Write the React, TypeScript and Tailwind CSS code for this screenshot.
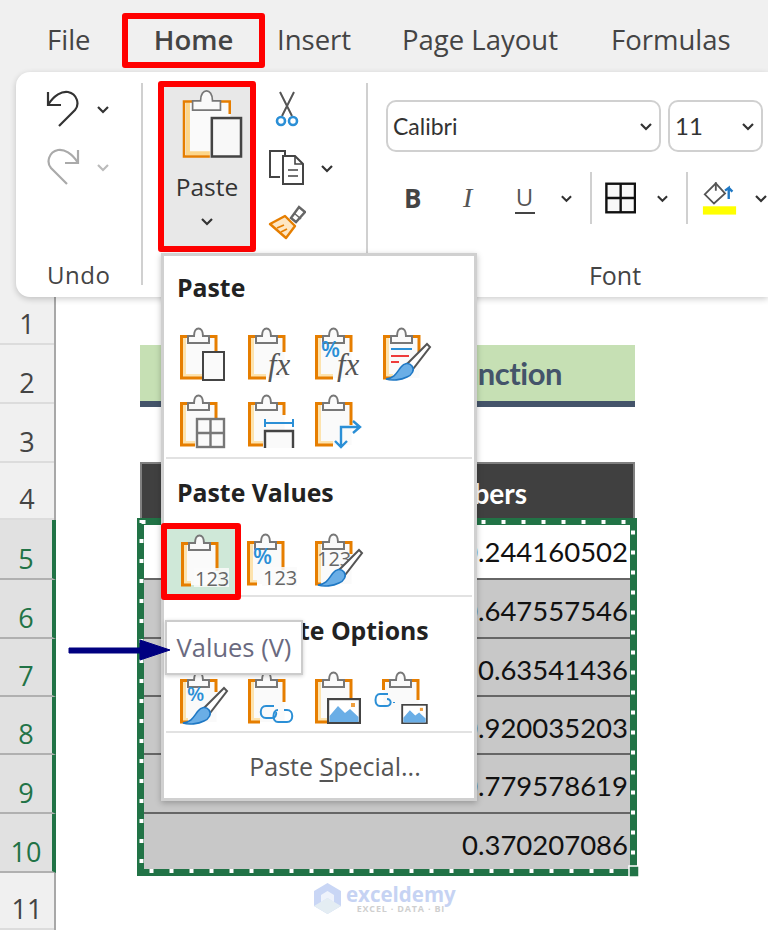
import React from "react";

const UI = "font-['Open_Sans',sans-serif]";
const CAL = "font-['Lato','Liberation_Sans',sans-serif]";
const ORANGE = "#e67e00";
const BLUE = "#2b8fd6";

function Chev({ c = "#333", className = "" }: { c?: string; className?: string }) {
  return (
    <svg width="14" height="9" viewBox="0 0 14 9" className={className}>
      <path d="M2 2 L7 7 L12 2" fill="none" stroke={c} strokeWidth="2.2" />
    </svg>
  );
}

function Clip({
  children,
  rightEnd = 50,
  bottomEnd = 36.5,
  w = 46,
  h = 54,
  stripe = "#fde3ae",
  sw = 3,
}: {
  children?: React.ReactNode;
  rightEnd?: number;
  bottomEnd?: number;
  w?: number;
  h?: number;
  stripe?: string;
  sw?: number;
}) {
  return (
    <svg width={w} height={h} viewBox="0 0 46 54" className="shrink-0 overflow-visible">
      <rect x="1.5" y="8" width="35" height="42" fill="#fafafa" />
      <path d={`M4.5 9 V47.5 H${Math.min(bottomEnd, 34)}`} fill="none" stroke={stripe} strokeWidth="3" />
      <path d={`M8 8.5 H1.5 V50 H${bottomEnd}`} fill="none" stroke={ORANGE} strokeWidth={sw} />
      <path d={`M28 8.5 H36 V${rightEnd}`} fill="none" stroke={ORANGE} strokeWidth={sw} />
      <path d="M8 15 V8 H14 C14 -2 23 -2 23 8 H29 V15 Z" fill="#fafafa" stroke="#777" strokeWidth={sw * 0.67} />
      {children}
    </svg>
  );
}

const Doc = () => <rect x="23" y="24" width="21" height="28" fill="#fafafa" stroke="#444" strokeWidth="2" />;

const FX = ({ x = 20 }: { x?: number }) => (
  <text x={x} y="47" fontFamily="Liberation Serif" fontStyle="italic" fontSize="31" fill="#555">
    fx
  </text>
);

const Pct = ({ x = 6, y = 30, s = 22 }: { x?: number; y?: number; s?: number }) => (
  <text x={x} y={y} fontFamily="Open Sans" fontWeight="600" fontSize={s} fill={BLUE}>
    %
  </text>
);

const Brush = () => (
  <g>
    <path d="M24 36 L44 16 L47 19 L30 41 Z" fill="#fff" stroke="#555" strokeWidth="2" />
    <path d="M3 51 C12 50 14 44 18 39 C21 35 26 34 29 38 C32 42 29 47 24 49 C18 52 9 53 3 51 Z" fill="#6aaee6" stroke="#1f78c4" strokeWidth="1.6" />
  </g>
);

const N123 = ({ x = 14, s = 20 }: { x?: number; s?: number }) => (
  <g>
    <rect x={x - 1} y="33" width={s * 1.75} height="19" fill="#fafafa" fillOpacity="0.85" />
    <text x={x} y="51" fontFamily="Open Sans" fontSize={s} fill="#666">
      123
    </text>
  </g>
);

const Chain = ({ x = 0, y = 0 }: { x?: number; y?: number }) => (
  <g transform={`translate(${x} ${y})`} fill="none" stroke={BLUE} strokeWidth="2">
    <path d="M14 8 H6 C-1 8 -1 20 6 20 H12 C15 20 17 17 16 14" />
    <path d="M18 12 C12 12 12 24 18 24 H27 C34 24 34 12 27 12 H24" />
  </g>
);

const Picture = ({ x, y, w, h }: { x: number; y: number; w: number; h: number }) => (
  <svg x={x} y={y} width={w} height={h} viewBox="0 0 34 26">
    <rect x="1" y="1" width="32" height="24" fill="#fff" stroke="#444" strokeWidth="2.4" />
    <path d="M2.5 24 V18 L11 8 L18 15 L23 11 L31.5 19 V24 Z" fill="#6aaee6" />
    <rect x="24" y="5" width="4" height="4" fill="#f0a040" />
  </svg>
);

function MenuIcons() {
  return {
    p1: <Clip rightEnd={24} bottomEnd={22}><Doc /></Clip>,
    p2: <Clip rightEnd={24} bottomEnd={18}><FX /></Clip>,
    p3: <Clip rightEnd={24} bottomEnd={18}><Pct x={6} y={29} /><FX x={22} /></Clip>,
    p4: (
      <Clip rightEnd={24} bottomEnd={10}>
        <path d="M8 21 H29" stroke={BLUE} strokeWidth="2" />
        <path d="M8 28 H26" stroke="#ee3b3b" strokeWidth="2" />
        <path d="M8 34 H16" stroke="#ee3b3b" strokeWidth="2" />
        <Brush />
      </Clip>
    ),
    p5: (
      <Clip rightEnd={24} bottomEnd={15}>
        <g fill="#fafafa" stroke="#777" strokeWidth="2.4">
          <rect x="17" y="24" width="27" height="28" />
          <path d="M30.5 24 V52 M17 38 H44" />
        </g>
      </Clip>
    ),
    p6: (
      <Clip rightEnd={20} bottomEnd={15}>
        <path d="M17 28 H45 M17 24 V32 M45 24 V32" fill="none" stroke={BLUE} strokeWidth="2" />
        <path d="M17 53 V36 H45 V53" fill="#fafafa" stroke="#444" strokeWidth="2.4" />
      </Clip>
    ),
    p7: (
      <Clip rightEnd={30} bottomEnd={18}>
        <path d="M26 52 V32 H44 M38 26 L45 32 L38 38 M20 46 L26 52 L32 46" fill="none" stroke={BLUE} strokeWidth="2.4" />
      </Clip>
    ),
    v1: <Clip rightEnd={36} bottomEnd={10}><N123 x={14} /></Clip>,
    v2: <Clip rightEnd={36} bottomEnd={10}><Pct x={6} y={30} /><N123 x={16} /></Clip>,
    v3: (
      <Clip rightEnd={20} bottomEnd={6}>
        <text x="2" y="32" fontFamily="Open Sans" fontSize="20" fill="#666">123</text>
        <Brush />
      </Clip>
    ),
    o1: <Clip rightEnd={20} bottomEnd={8}><Pct x={7} y={29} s={20} /><Brush /></Clip>,
    o2: <Clip rightEnd={30} bottomEnd={12}><Chain x={12} y={26} /></Clip>,
    o3: <Clip rightEnd={28} bottomEnd={12}><Picture x={12} y={26} w={34} h={26} /></Clip>,
    o4: (
      <svg width="56" height="54" viewBox="0 0 56 54" className="-ml-[9px] shrink-0 overflow-visible">
        <rect x="9.5" y="8" width="35" height="30" fill="#fafafa" />
        <path d="M16 8.5 H9.5 V18 M36 8.5 H44 V28" fill="none" stroke={ORANGE} strokeWidth="3" />
        <path d="M16 15 V8 H22 C22 -2 31 -2 31 8 H37 V15 Z" fill="#fafafa" stroke="#777" strokeWidth="2" />
        <path d="M14 22 H6 C0 22 0 34 6 34 H12 C18 34 18 27 13 27 M20 30 V31" fill="none" stroke={BLUE} strokeWidth="2" />
        <Picture x={27} y={32} w={27} h={20} />
      </svg>
    ),
  };
}

function Scissors() {
  return (
    <svg width="24" height="36" viewBox="0 0 24 36">
      <path d="M5 1 L17 25 M19 1 L7 25" stroke="#555" strokeWidth="2" fill="none" />
      <circle cx="6" cy="30" r="4" fill="#fff" stroke={BLUE} strokeWidth="2.6" />
      <circle cx="18" cy="30" r="4" fill="#fff" stroke={BLUE} strokeWidth="2.6" />
    </svg>
  );
}

function CopyIcon() {
  return (
    <svg width="37" height="36" viewBox="0 0 37 36">
      <path d="M12 27 H2 V1 H17 V5" fill="none" stroke="#444" strokeWidth="2" />
      <path d="M15 6 H27 L35 14 V34 H15 Z" fill="#fff" stroke="#444" strokeWidth="2" />
      <path d="M27 6 V14 H35 M20 20 H30 M20 26 H30" fill="none" stroke="#444" strokeWidth="1.6" />
    </svg>
  );
}

function BroomIcon() {
  return (
    <svg width="38" height="36" viewBox="0 0 38 36">
      <path d="M23 13 L31 2 L37 7 L28 17 Z" fill="#fff" stroke="#666" strokeWidth="2.4" />
      <path d="M26 8 L33 14" stroke="#666" strokeWidth="1.6" />
      <path d="M2 19 L17 11 L27 21 L18 33 Z" fill="#fde6c4" stroke={ORANGE} strokeWidth="2.4" strokeLinejoin="round" />
      <path d="M9 23 L16 20 M13 27 L19 24" stroke={ORANGE} strokeWidth="1.8" />
    </svg>
  );
}

function Ribbon() {
  return (
    <div className="relative z-10 ml-4 flex h-[225px] overflow-hidden rounded-l-[14px] bg-white shadow-[0_2px_6px_rgba(0,0,0,0.2)]">
      <div className="flex w-[125px] shrink-0 flex-col pl-[30px] pt-[18px]">
        <div className="flex items-center gap-[16px]">
          <svg width="34" height="38" viewBox="0 0 34 38">
            <path d="M2 2 V15 H15" fill="none" stroke="#333" strokeWidth="2.2" />
            <path d="M2 15 C8 5 16 1 22 2 C31 4 34 14 29 20 L13 36" fill="none" stroke="#333" strokeWidth="2.2" />
          </svg>
          <Chev />
        </div>
        <div className="mt-[20px] flex items-center gap-[16px]">
          <svg width="34" height="38" viewBox="0 0 34 38">
            <path d="M32 2 V15 H19" fill="none" stroke="#aaa" strokeWidth="2.2" />
            <path d="M32 15 C26 5 18 1 12 2 C3 4 0 14 5 20 L21 36" fill="none" stroke="#aaa" strokeWidth="2.2" />
          </svg>
          <Chev c="#bbb" />
        </div>
        <span className={`${UI} mt-auto mb-[6px] text-[24px] leading-[32px] text-[#444] tracking-[0.5px] ml-px`}>Undo</span>
      </div>
      <div className="mt-[11px] h-[202px] w-[2px] shrink-0 bg-[#d0d0d0]" />
      <div className="ml-[15px] mt-[9px] flex h-[171px] w-[98px] shrink-0 flex-col items-center rounded-[3px] border-[6px] border-[#ff0000] bg-[#e8e8e8] pt-[3px]">
        <div className="ml-[10px]">
          <Clip w={61} h={72} rightEnd={18} bottomEnd={21} stripe="#fdd68a" sw={1.9}>
            <rect x="22.5" y="21" width="22" height="29" fill="#f8f8f8" stroke="#444" strokeWidth="1.9" />
          </Clip>
        </div>
        <span className={`${UI} mt-[11px] text-[24.5px] leading-[28px] text-[#333]`}>Paste</span>
        <Chev className="mt-[16px]" />
      </div>
      <div className="flex w-[110px] shrink-0 flex-col pl-[12px] pt-[19px]">
        <div className="ml-[7px]"><Scissors /></div>
        <div className="mt-[23px] flex items-center gap-[15px]">
          <CopyIcon />
          <Chev />
        </div>
        <div className="mt-[19px]"><BroomIcon /></div>
      </div>
      <div className="mt-[11px] h-[170px] w-[2px] shrink-0 bg-[#d0d0d0]" />
      <div className="relative flex min-w-0 flex-1 flex-col pl-[18px] pt-[28px]">
        <div className="flex gap-[7px]">
          <div className={`flex h-[52px] w-[275px] items-center justify-between rounded-[10px] border-2 border-[#d0d0d0] pl-[5px] pr-[6px] text-[23px] text-[#333]`}>
            <span className={CAL}>Calibri</span>
            <Chev />
          </div>
          <div className={`flex h-[52px] w-[95px] items-center justify-between rounded-[10px] border-2 border-[#d0d0d0] pl-[5px] pr-[6px] text-[24px] text-[#333]`}>
            <span className={CAL}>11</span>
            <Chev />
          </div>
        </div>
        <div className="mt-[20px] flex h-[52px] items-center">
          <span className={`${UI} ml-[18px] w-[64px] text-[26px] font-bold text-[#444]`}>B</span>
          <span className="w-[54px] font-['Liberation_Serif',serif] text-[28px] italic text-[#555]">I</span>
          <span className={`${UI} ml-[2px] w-[22px] border-b-2 border-[#444] px-[1px] text-[24px] leading-[30px] text-[#555]`}>U</span>
          <Chev className="ml-[25px]" />
          <div className="ml-[17px] h-[52px] w-[2px] bg-[#d0d0d0]" />
          <svg width="34" height="34" viewBox="0 0 34 34" className="ml-[13px]">
            <rect x="1.5" y="1.5" width="31" height="31" fill="#f8f8f8" stroke="#111" strokeWidth="2.6" />
            <path d="M17 1.5 V32.5 M1.5 17 H32.5" stroke="#111" strokeWidth="2.6" />
          </svg>
          <Chev className="ml-[20px]" />
          <div className="ml-[17px] h-[52px] w-[2px] bg-[#d0d0d0]" />
          <svg width="38" height="38" viewBox="0 0 38 38" className="ml-[14px]">
            <path d="M3 15 L15 3 L25 14 L13 25 Z" fill="none" stroke="#555" strokeWidth="2" />
            <path d="M15 2 V11" stroke="#555" strokeWidth="2" />
            <path d="M29 20 V8 L25 11 M29 8 L33 12" fill="none" stroke="#1f78c4" strokeWidth="2.6" />
            <rect x="1" y="28" width="36" height="9" fill="#ffff00" />
          </svg>
          <Chev className="ml-[17px] shrink-0" />
        </div>
        <span className={`${UI} mt-auto mb-[6px] ml-[76px] text-center text-[25px] leading-[32px] text-[#444]`}>Font</span>
      </div>
    </div>
  );
}

const Sep = ({ className = "" }: { className?: string }) => (
  <div className={`mx-[2px] h-[2px] shrink-0 bg-[#e2e2e2] ${className}`} />
);

const Head = ({ children, className = "" }: { children: React.ReactNode; className?: string }) => (
  <div className={`${UI} flex shrink-0 items-center pl-[13px] text-[24.8px] font-bold text-[#222] ${className}`}>{children}</div>
);

function Menu() {
  const i = MenuIcons();
  const cell = "flex w-[67.5px] shrink-0";
  return (
    <div className="absolute left-[161px] top-[253px] z-20 flex h-[548px] w-[316px] flex-col border-[3px] border-[#d0d0d0] bg-white shadow-[0_2px_6px_rgba(0,0,0,0.25)]">
      <Head className="h-[66px] pb-[2px]">Paste</Head>
      <div className="mt-[6px] flex pl-[16px]">
        <div className={cell}>{i.p1}</div>
        <div className={cell}>{i.p2}</div>
        <div className={cell}>{i.p3}</div>
        <div className={cell}>{i.p4}</div>
      </div>
      <div className="mt-[13px] flex pl-[16px]">
        <div className={cell}>{i.p5}</div>
        <div className={cell}>{i.p6}</div>
        <div className={cell}>{i.p7}</div>
      </div>
      <Sep className="mt-[8px]" />
      <Head className="h-[64px] pt-[4px]">Paste Values</Head>
      <div className="flex h-[72px] shrink-0">
        <div className="relative z-10 -ml-[3px] flex h-[77px] w-[80px] shrink-0 items-center justify-center rounded-[3px] border-[6px] border-[#ff0000] bg-[#cfe8d8] pl-[6px]">
          {i.v1}
        </div>
        <div className="flex pl-[6px] pt-[11px]">
          <div className={cell}>{i.v2}</div>
          <div className={cell}>{i.v3}</div>
        </div>
      </div>
      <Sep />
      <Head className="h-[68px]">Other Paste Options</Head>
      <div className="mt-[7px] flex pl-[16px]">
        <div className={cell}>{i.o1}</div>
        <div className={cell}>{i.o2}</div>
        <div className={cell}>{i.o3}</div>
        <div className={cell}>{i.o4}</div>
      </div>
      <Sep className="mt-[5px]" />
      <div className={`${UI} flex h-[65px] items-center justify-center pl-[32px] pt-[3px] text-[25px] text-[#555]`}>
        <span>
          Paste <span className="underline underline-offset-4">S</span>pecial...
        </span>
      </div>
    </div>
  );
}

const headerRows = [
  { n: "1", h: 48 },
  { n: "2", h: 59 },
  { n: "3", h: 59 },
  { n: "4", h: 57 },
  { n: "5", h: 60, sel: true },
  { n: "6", h: 59, sel: true },
  { n: "7", h: 58, sel: true },
  { n: "8", h: 58, sel: true },
  { n: "9", h: 59, sel: true },
  { n: "10", h: 59, sel: true },
  { n: "11", h: 57 },
];

const values = [
  { v: "0.244160502", h: 60, bg: "bg-white" },
  { v: "0.647557546", h: 59, bg: "bg-[#c8c8c8]" },
  { v: "0.63541436", h: 58, bg: "bg-[#c8c8c8]" },
  { v: "0.920035203", h: 58, bg: "bg-[#c8c8c8]" },
  { v: "0.779578619", h: 59, bg: "bg-[#c8c8c8]" },
  { v: "0.370207086", h: 59, bg: "bg-[#c8c8c8]" },
];

function Sheet() {
  return (
    <div className="flex h-[633px] overflow-hidden">
      <div className="flex w-[56px] shrink-0 flex-col border-r-2 border-[#a8a8a8] bg-[#f0f0f0]">
        {headerRows.map((r) => (
          <div
            key={r.n}
            style={{ height: r.h }}
            className={`${UI} flex shrink-0 items-end justify-center border-b-2 pb-[1px] text-[27px] leading-[36px] ${
              r.sel
                ? "mr-[-2px] border-[#b0b0b0] border-r-4 border-r-[#217346] bg-[#e1e1e1] text-[#217346]"
                : "border-[#dcdcdc] text-[#444]"
            }`}
          >
            {r.n}
          </div>
        ))}
      </div>
      <div className="min-w-0 flex-1 bg-white pl-[84px]">
        <div className="flex w-[495px] flex-col">
          <div className="h-[48px]" />
          <div className={`${CAL} flex h-[62px] items-center justify-end border-b-[6px] border-[#44546a] bg-[#c6e0b4] pr-[73px] text-[31px] font-bold tracking-[-0.5px] text-[#44546a]`}>
            RAND Function
          </div>
          <div className="h-[55px]" />
          <div className={`${CAL} flex h-[58px] items-center justify-end border-2 border-[#808080] bg-[#404040] pr-[106px] pt-[4px] text-[28px] font-bold text-white`}>
            Random Numbers
          </div>
          {values.map((r) => (
            <div
              key={r.v}
              style={{ height: r.h }}
              className={`${CAL} ${r.bg} flex items-center justify-end border-b-2 border-[#666] pr-[7px] pt-[5px] text-[27.5px] text-[#111]`}
            >
              {r.v}
            </div>
          ))}
        </div>
      </div>
    </div>
  );
}

function Selection() {
  return (
    <div className="pointer-events-none absolute left-[137px] top-[518px] z-[5] h-[358px] w-[500px]">
      <svg width="500" height="358" viewBox="0 0 500 358" className="block overflow-visible">
        <rect x="3.5" y="3.5" width="493" height="351" fill="none" stroke="#217346" strokeWidth="7" />
        <rect x="4.5" y="4" width="491.5" height="349" fill="none" stroke="#fff" strokeWidth="4" strokeDasharray="4 16" />
        <rect x="492" y="348" width="10" height="11" fill="#217346" stroke="#fff" strokeWidth="1.5" />
      </svg>
    </div>
  );
}

export default function App() {
  return (
    <div className="relative h-[930px] w-[768px] overflow-hidden bg-[#f0f0f0]">
      <div className={`${UI} flex h-[72px] items-center pt-[8px] text-[27.5px] text-[#444]`}>
        <span className="ml-[47px] w-[75px]">File</span>
        <div className="flex h-[55px] w-[143px] items-center justify-center rounded-[3px] border-[6px] border-[#ff0000] font-semibold text-[#444]">
          Home
        </div>
        <span className="ml-[12px] w-[125px]">Insert</span>
        <span className="w-[209px]">Page Layout</span>
        <span>Formulas</span>
      </div>
      <Ribbon />
      <Sheet />
      <Selection />
      <Menu />
      <div className={`${UI} absolute left-[165px] top-[620px] z-30 flex h-[55px] w-[138px] items-center justify-center border-2 border-[#ccc] bg-white text-[25.5px] text-[#6a6a80] shadow-[0_1px_4px_rgba(0,0,0,0.2)]`}>
        Values (V)
      </div>
      <svg width="106" height="24" viewBox="0 0 106 24" className="absolute left-[67px] top-[639px] z-40">
        <path d="M2 9 H73 V1 L103 11 L73 21 V14 H2 Z" fill="#000080" stroke="#000080" strokeWidth="1" strokeLinejoin="round" />
      </svg>
      <div className="absolute left-[313px] top-[883px] z-10 flex items-center gap-[4px]">
        <svg width="29" height="31" viewBox="0 0 29 31">
          <path d="M14.5 0 L28 8 V23 L14.5 31 L1 23 V8 Z" fill="#c9d6f5" />
          <path d="M14.5 15 L28 23 L14.5 31 L1 23 Z" fill="#e4edf3" />
          <path d="M14.5 8 L21 12 V19 L14.5 15 L8 19 V12 Z" fill="#eef2fb" />
        </svg>
        <div className="flex flex-col items-center">
          <span className="font-['Open_Sans',sans-serif] text-[20.5px] font-bold leading-[20px] text-[#c6d3f3]">exceldemy</span>
          <span className="font-['Open_Sans',sans-serif] text-[9px] font-bold leading-[10px] tracking-[0.8px] text-[#cfcfcf]">EXCEL · DATA · BI</span>
        </div>
      </div>
    </div>
  );
}
